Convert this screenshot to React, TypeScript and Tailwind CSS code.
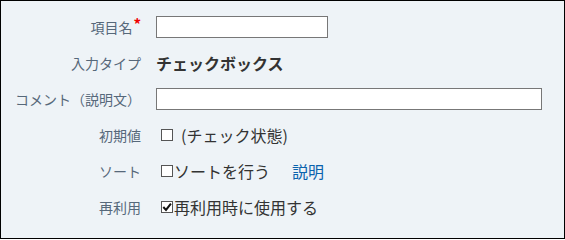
import React from "react";

const font = { fontFamily: '"Noto Sans CJK JP", "Noto Sans", sans-serif' };

function Box({ checked = false }: { checked?: boolean }) {
  return (
    <span className="inline-flex h-[12px] w-[12px] shrink-0 items-center justify-center border border-[#555] bg-white">
      {checked && (
        <svg width="10" height="10" viewBox="0 0 10 10">
          <path d="M1.3 5 L4 7.9 L8.9 1.6" fill="none" stroke="#111" strokeWidth="2" />
        </svg>
      )}
    </span>
  );
}

function Row({ label, children }: { label: React.ReactNode; children: React.ReactNode }) {
  return (
    <div className="flex h-[36px] items-center">
      <div className="w-[140px] shrink-0 text-right text-[14px] text-[#56687a]">{label}</div>
      <div className="ml-[15px] flex items-center text-[16px] text-[#333]">{children}</div>
    </div>
  );
}

export default function App() {
  return (
    <div className="h-[239px] w-[565px] border border-black bg-[#eef3f7] pt-[8px]" style={font}>
      <Row
        label={
          <span>
            項目名<span className="relative -top-[3px] ml-[1px] text-[15px] font-bold leading-none text-[#f00000]">*</span>
          </span>
        }
      >
        <div className="h-[22px] w-[172px] border border-[#777] bg-white" />
      </Row>
      <Row label="入力タイプ">
        <span className="text-[16px] font-bold text-[#333]">チェックボックス</span>
      </Row>
      <Row label="コメント（説明文）">
        <div className="h-[22px] w-[386px] border border-[#777] bg-white" />
      </Row>
      <Row label="初期値">
        <span className="ml-[5px] flex items-center">
          <Box />
          <span className="ml-[8px]">(チェック状態)</span>
        </span>
      </Row>
      <Row label="ソート">
        <span className="ml-[5px] flex items-center">
          <Box />
          <span className="ml-[1px]">ソートを行う</span>
          <span className="ml-[22px] text-[#0a62ad]">説明</span>
        </span>
      </Row>
      <Row label="再利用">
        <span className="ml-[5px] flex items-center">
          <Box checked />
          <span className="ml-[1px]">再利用時に使用する</span>
        </span>
      </Row>
    </div>
  );
}
